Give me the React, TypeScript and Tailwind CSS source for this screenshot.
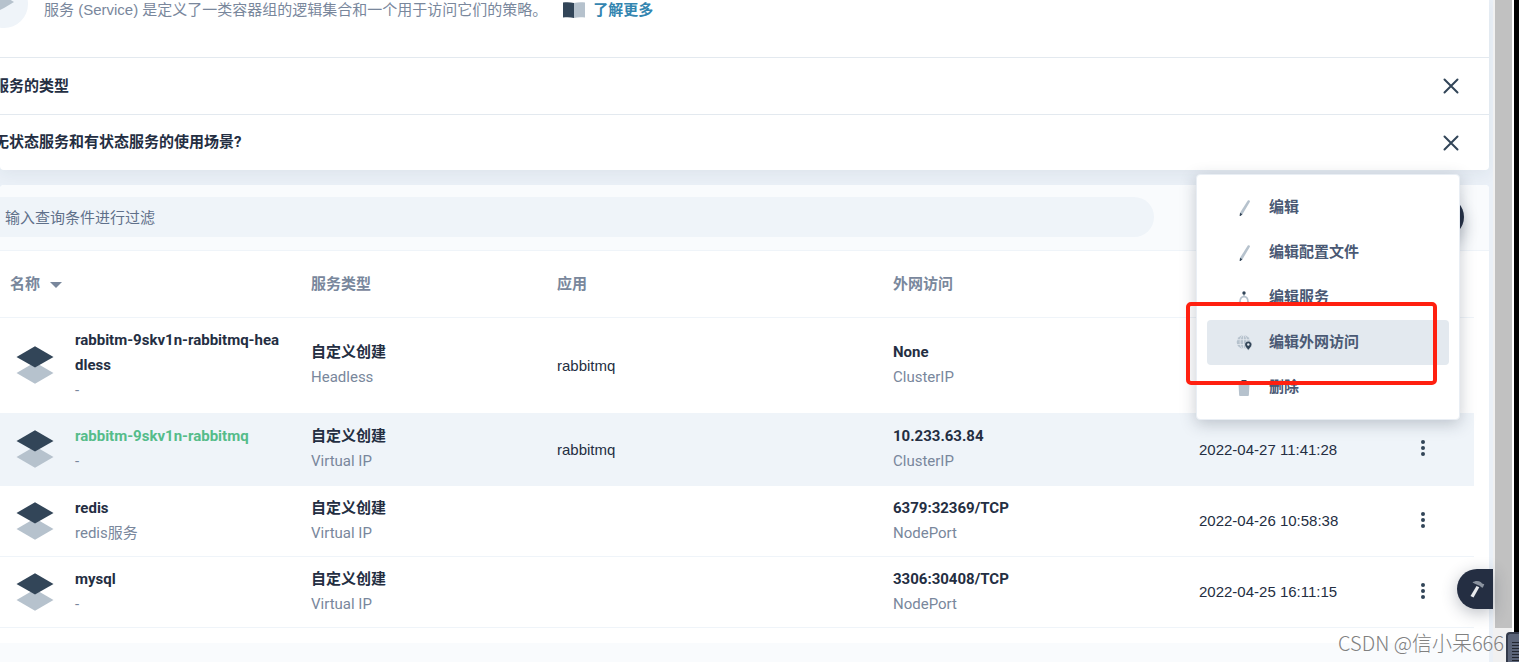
type Service = {
  name: string;
  desc: string;
  kind: string;
  app?: string;
  access: string;
  accessType: string;
  created: string;
  active?: boolean;
};

const services: Service[] = [
  { name: "rabbitm-9skv1n-rabbitmq-headless", desc: "-", kind: "Headless", app: "rabbitmq", access: "None", accessType: "ClusterIP", created: "" },
  { name: "rabbitm-9skv1n-rabbitmq", desc: "-", kind: "Virtual IP", app: "rabbitmq", access: "10.233.63.84", accessType: "ClusterIP", created: "2022-04-27 11:41:28", active: true },
  { name: "redis", desc: "redis服务", kind: "Virtual IP", access: "6379:32369/TCP", accessType: "NodePort", created: "2022-04-26 10:58:38" },
  { name: "mysql", desc: "-", kind: "Virtual IP", access: "3306:30408/TCP", accessType: "NodePort", created: "2022-04-25 16:11:15" },
];

const tips = ["服务的类型", "无状态服务和有状态服务的使用场景?"];

function LayersIcon() {
  return (
    <svg viewBox="0 0 40 40" className="size-10 shrink-0" aria-hidden="true">
      <path d="M1.5 28 20 17.3 38.5 28 20 38.8Z" fill="#b6c2cd" />
      <path d="M1.5 12 20 1.2 38.5 12 20 22.6Z" fill="#324558" />
    </svg>
  );
}

function PenIcon() {
  return (
    <svg viewBox="0 0 16 16" className="size-4" aria-hidden="true">
      <path d="M11.800.4c.9-.7 2.500.2 2.100 1.300L6.500 14.200 4 12.800Z" fill="#b6c2cd" />
      <path d="m4 12.800 2.500 1.400L4.200 16.300l-.6-.4Z" fill="#324558" />
    </svg>
  );
}

function NetworkIcon() {
  return (
    <svg viewBox="0 0 16 16" className="size-4" aria-hidden="true">
      <path d="M8 3v3.500M3.900 12.500c0-3.700 1.500-5.800 4.100-5.800s4.100 2.100 4.100 5.800" fill="none" stroke="#b6c2cd" strokeWidth="1.700" />
      <circle cx="8" cy="3" r="1.700" fill="#324558" />
      <circle cx="4" cy="13" r="1.700" fill="#b6c2cd" />
      <circle cx="12" cy="13" r="1.700" fill="#b6c2cd" />
    </svg>
  );
}

function GlobePinIcon() {
  return (
    <svg viewBox="0 0 16 16" className="size-4" aria-hidden="true">
      <circle cx="7.500" cy="7" r="6.800" fill="#b6c2cd" />
      <path d="M.5 4.700h14M.5 9.500h14M7.500 0v15" stroke="#e3e9ef" strokeWidth=".8" fill="none" />
      <ellipse cx="7.500" cy="7" rx="3.400" ry="6.800" fill="none" stroke="#e3e9ef" strokeWidth=".8" />
      <path d="M12.300 6.200c-2 0-3.500 1.500-3.500 3.400 0 2.200 2 3.500 3.500 5.600 1.500-2.100 3.500-3.400 3.500-5.600 0-1.900-1.500-3.400-3.500-3.400Z" fill="#324558" stroke="#e3e9ef" strokeWidth=".5" />
      <circle cx="12.300" cy="9.500" r="1.200" fill="#e3e9ef" />
    </svg>
  );
}

function TrashIcon() {
  return (
    <svg viewBox="0 0 16 16" className="size-4" aria-hidden="true">
      <path d="M2.500 3.500h11l-.6 11.300c0 .8-.5 1.200-1.200 1.200H4.300c-.7 0-1.200-.4-1.200-1.200Z" fill="#b6c2cd" />
      <path d="M1.500 1H5L6 0h4l1 1h3.500v1.800h-13Z" fill="#324558" />
    </svg>
  );
}

const menuItems = [
  { label: "编辑", icon: PenIcon },
  { label: "编辑配置文件", icon: PenIcon },
  { label: "编辑服务", icon: NetworkIcon },
  { label: "编辑外网访问", icon: GlobePinIcon, active: true },
  { label: "删除", icon: TrashIcon },
];

function Banner() {
  return (
    <section className="overflow-hidden rounded-b bg-white shadow-[0_4px_16px_rgba(36,46,66,0.06)]">
      <div className="flex h-[57px]">
        <div className="-mt-5 -ml-5 size-12 shrink-0 rounded-full bg-[#eff4f9]">
          <svg viewBox="0 0 48 48" className="size-12" aria-hidden="true">
            <path d="M14 22 24 16 34 22 24 28 18 31Z" fill="#b6c2cd" />
          </svg>
        </div>
        <p className="ml-4 font-['Liberation_Sans','Noto_Sans_CJK_SC',sans-serif] leading-5 text-[#79879c]">
          服务 (Service) 是定义了一类容器组的逻辑集合和一个用于访问它们的策略。
        </p>
        <a href="#more" className="ml-4 flex h-5 items-center gap-2 font-bold text-[#3385b0]">
          <svg viewBox="0 0 22 16" className="h-4 w-[22px]" aria-hidden="true">
            <path d="M0 .5c4-.6 8-.3 11 .5v15c-3-1-7-1-11-.6Z" fill="#324558" />
            <path d="M22 .5c-4-.6-8-.3-11 .5v15c3-1 7-1 11-.6Z" fill="#b6c2cd" />
          </svg>
          了解更多
        </a>
      </div>
      {tips.map((tip) => (
        <div key={tip} className="flex h-[57px] items-center justify-between border-t border-[#e3e9ef] pr-7 last:h-14">
          <h3 className="-ml-[6px] font-bold text-[#242e42]">{tip}</h3>
          <button type="button" aria-label="关闭">
            <svg viewBox="0 0 20 20" className="size-5" aria-hidden="true">
              <path d="m3.500 3.500 13 13m0-13-13 13" stroke="#324558" strokeWidth="2" strokeLinecap="round" />
            </svg>
          </button>
        </div>
      ))}
    </section>
  );
}

function ServiceRow({ item }: { item: Service }) {
  return (
    <tr className={item.active ? "h-[72px] border-b border-[#eff4f9] bg-[#eff4f9]" : "h-[71px] border-b border-[#eff4f9]"}>
      <td className="py-[10px] pr-2 pl-[15px]">
        <div className="flex items-center gap-5">
          <LayersIcon />
          <div>
            <a href="#service" className={item.active ? "font-bold break-all text-[#55bc8a]" : "font-bold break-all"}>{item.name}</a>
            <p className="text-[#79879c]">{item.desc}</p>
          </div>
        </div>
      </td>
      <td className="px-5">
        <p className="font-bold">自定义创建</p>
        <p className="text-[#79879c]">{item.kind}</p>
      </td>
      <td className="px-5 font-['Liberation_Sans',sans-serif]">{item.app}</td>
      <td className="px-5">
        <p className="font-bold">{item.access}</p>
        <p className="text-[#79879c]">{item.accessType}</p>
      </td>
      <td className="px-5 font-['Liberation_Sans',sans-serif]">{item.created}</td>
      <td className="px-[10px]">
        <button type="button" aria-label="更多操作" className="block">
          <svg viewBox="0 0 20 20" className="size-5" fill="#324558" aria-hidden="true">
            <circle cx="10" cy="3" r="2" />
            <circle cx="10" cy="9" r="2" />
            <circle cx="10" cy="15" r="2" />
          </svg>
        </button>
      </td>
    </tr>
  );
}

function ServiceTable() {
  return (
    <section className="mt-[15px] flex grow flex-col rounded-t bg-white">
      <div className="flex h-[66px] items-start justify-between rounded-t border-b border-[#eff4f9] bg-[#f9fbfd] pt-3 pr-[25px]">
        <input type="text" aria-label="过滤" placeholder="输入查询条件进行过滤" className="mr-[214px] h-10 min-w-0 grow rounded-r-full bg-[#eff4f9] px-[5px] pt-[2px] outline-none placeholder:text-[#5f708a]" />
        <button type="button" aria-label="创建" className="h-10 w-24 shrink-0 rounded-full bg-[#242e42] shadow-[0_8px_16px_rgba(36,46,66,0.28)]" />
      </div>
      <div className="pr-[15px] pb-[15px]">
        <table className="w-full table-fixed border-collapse text-left leading-[25px] text-[#242e42]">
          <colgroup>
            <col className="w-[291px]" />
            <col className="w-[246px]" />
            <col />
            <col className="w-[306px]" />
            <col className="w-[224px]" />
            <col className="w-[71px]" />
          </colgroup>
          <thead>
            <tr className="h-[66px] border-b border-[#eff4f9] text-[#79879c]">
              <th className="pt-[2px] pl-[10px]">
                <button type="button" className="flex items-center gap-[10px]">
                  名称
                  <svg viewBox="0 0 12 6" className="h-[6px] w-3" fill="#79879c" aria-hidden="true">
                    <path d="M0 0h12L6 6Z" />
                  </svg>
                </button>
              </th>
              <th className="px-5 pt-[2px]">服务类型</th>
              <th className="px-5 pt-[2px]">应用</th>
              <th className="px-5 pt-[2px]">外网访问</th>
              <th />
              <th />
            </tr>
          </thead>
          <tbody>
            {services.map((item) => (
              <ServiceRow key={item.name} item={item} />
            ))}
          </tbody>
        </table>
      </div>
      <div className="grow bg-[#f9fbfd]" />
    </section>
  );
}

function ActionMenu() {
  return (
    <div className="absolute top-[174px] right-[59px] w-[264px] rounded border border-[#e9eef4] bg-white px-[10px] pt-[10px] pb-[9px] shadow-[0_4px_16px_rgba(36,46,66,0.25)]">
      {menuItems.map(({ label, icon: Icon, active }) => (
        <button
          key={label}
          type="button"
          className={
            active
              ? "flex h-[45px] w-full items-center gap-[17px] rounded bg-[#e3e9ef] pl-[29px] font-bold text-[#4a5974]"
              : "flex h-[45px] w-full items-center gap-[17px] rounded pl-[29px] font-bold text-[#4a5974]"
          }
        >
          <Icon />
          {label}
        </button>
      ))}
    </div>
  );
}

export default function App() {
  return (
    <div className="relative flex min-h-screen overflow-hidden bg-[#eaf0f7] font-[Roboto,'Noto_Sans_CJK_SC',sans-serif] text-[15px]">
      <main className="flex min-w-0 grow flex-col pr-1">
        <Banner />
        <ServiceTable />
      </main>

      <div className="w-[19px] shrink-0 bg-[#f1f1f1] pl-[2px]">
        <div className="h-[628px] w-[17px] bg-[#c1c1c1]" />
      </div>
      <div className="w-[2px] shrink-0 bg-white" />
      <div className="w-[5px] shrink-0 bg-black" />

      <ActionMenu />

      <div className="absolute top-[302px] right-[82px] h-[83px] w-[251px] rounded-[5px] border-4 border-[#ff2010]" />

      <button type="button" aria-label="工具箱" className="absolute top-[569px] right-[26px] flex h-10 w-9 items-center rounded-l-full bg-[#242e42] pl-3 shadow-[0_4px_16px_rgba(36,46,66,0.3)]">
        <svg viewBox="0 0 16 18" className="h-[18px] w-4" aria-hidden="true">
          <path d="M7.500 6 10.300 7.300 4.500 17.500 1.500 16Z" fill="#e8eaed" />
          <path d="M3.500 2.500C6 .5 9.500.5 12 2.300l1 1.200 2.300.8-1.500 3.500-2-.8-.6-1L6.500 4 3.500 2.500Z" fill="#8b939f" />
        </svg>
      </button>

      <div className="absolute right-0 bottom-0 h-[30px] w-[13px] rounded-tl border-2 border-r-0 border-b-0 border-[#333a4a] bg-[#5b6478] pt-2 pl-1">
        <div className="h-full bg-[repeating-linear-gradient(#22262f_0_1px,#5b6478_1px_3px)]" />
      </div>
      <p className="absolute right-[15px] bottom-[5px] font-['Noto_Sans_CJK_SC',sans-serif] text-[20px] leading-7 font-light text-[#808080]">CSDN @信小呆666</p>
    </div>
  );
}
